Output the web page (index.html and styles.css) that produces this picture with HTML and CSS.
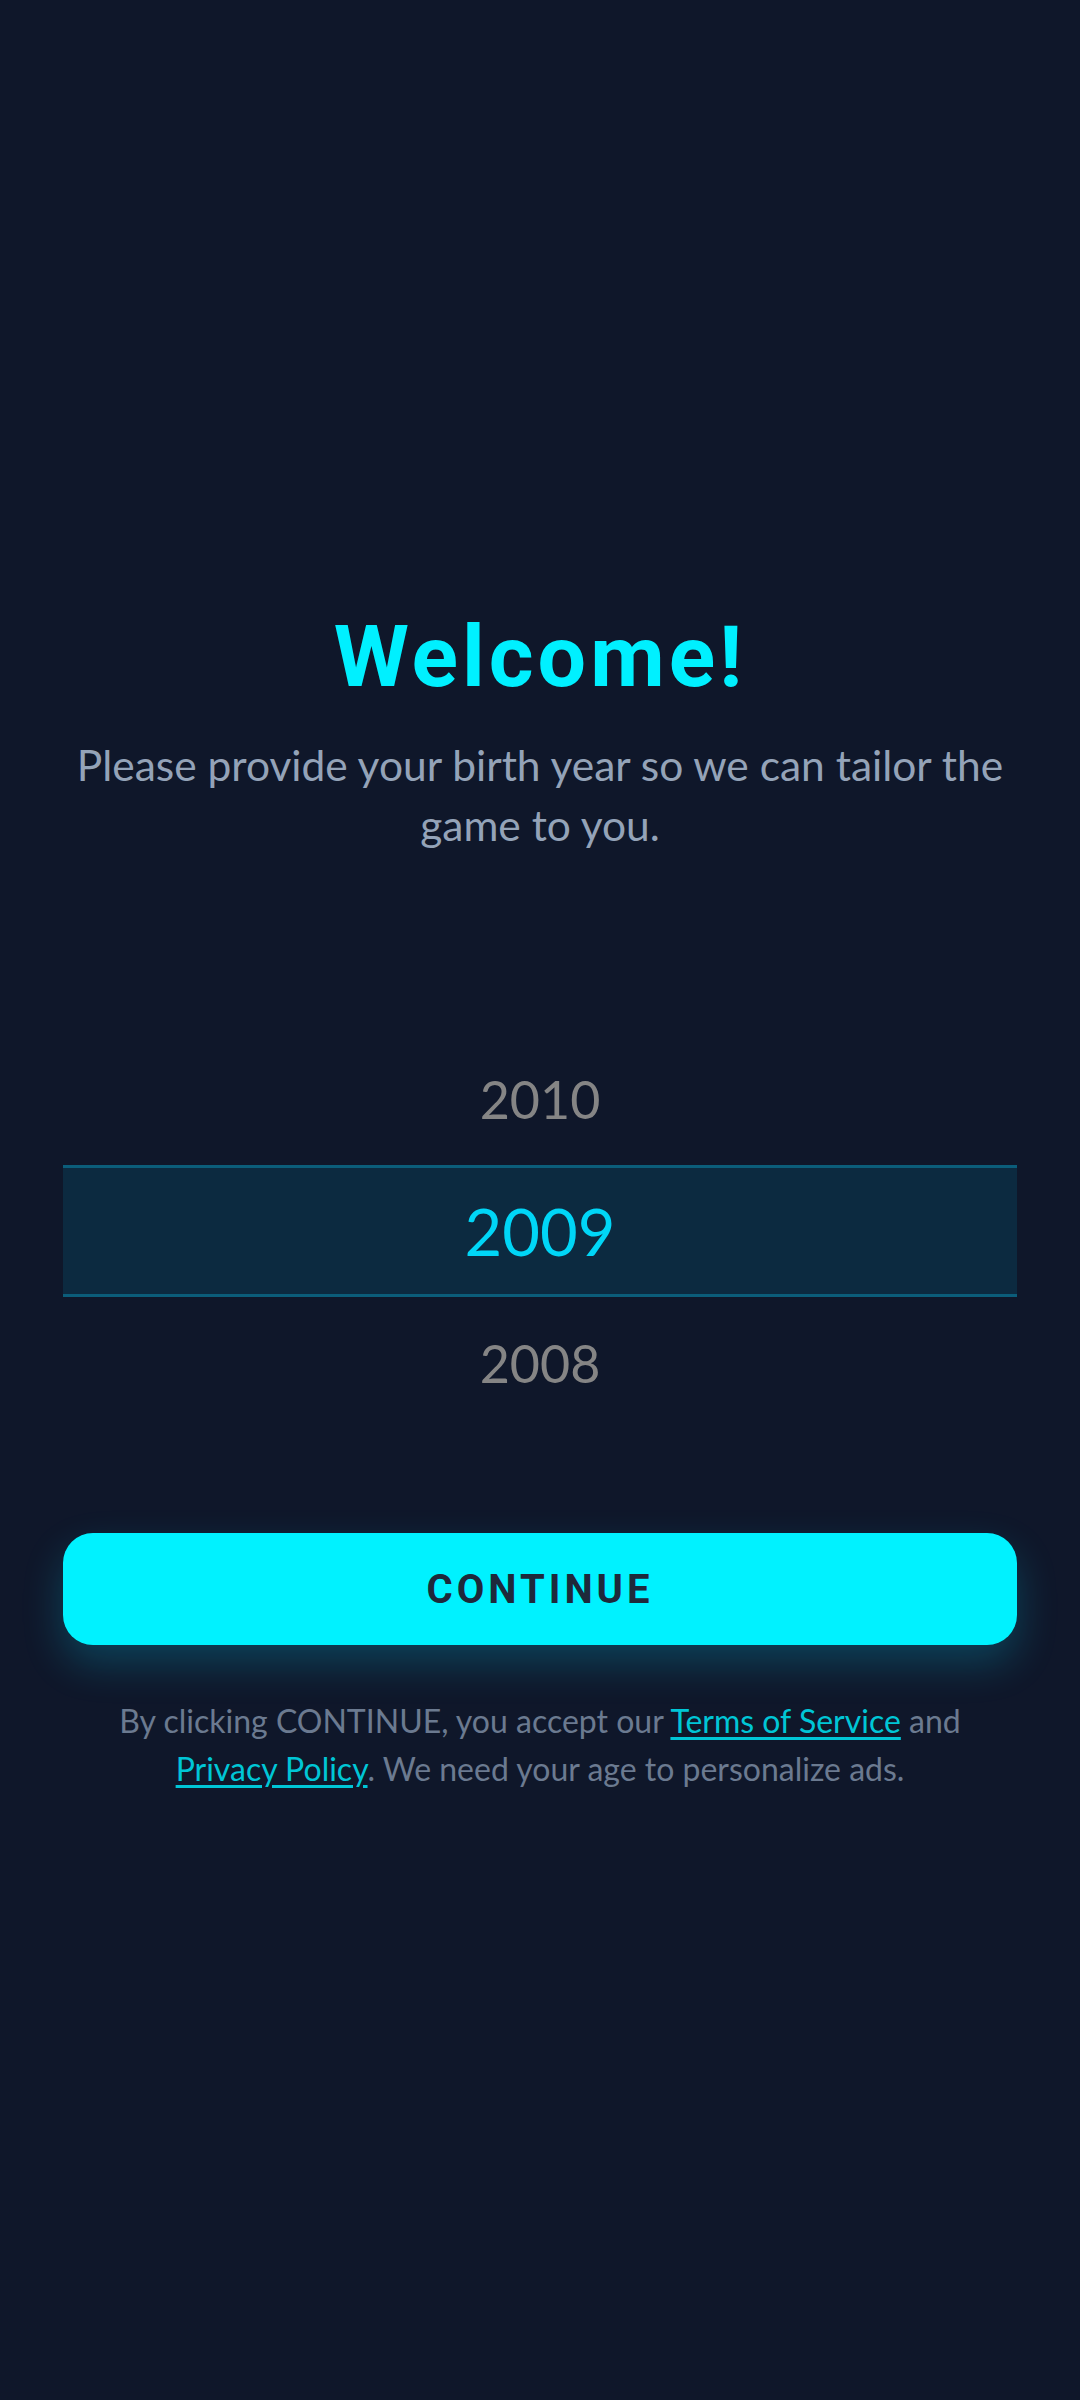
FILE: index.html
```html
<!DOCTYPE html>
<html lang="en">
<head>
<meta charset="utf-8">
<title>Welcome</title>
<link rel="stylesheet" href="styles.css">
</head>
<body>
<main class="screen">
  <h1 class="title">Welcome!</h1>
  <p class="subtitle">Please provide your birth year so we can tailor the game to you.</p>
  <div class="picker">
    <div class="year">2010</div>
    <div class="year selected">2009</div>
    <div class="year">2008</div>
  </div>
  <button class="continue">CONTINUE</button>
  <p class="legal">By clicking CONTINUE, you accept our <a href="#">Terms of Service</a> and <a href="#">Privacy Policy</a>. We need your age to personalize ads.</p>
</main>
</body>
</html>
```

FILE: styles.css
```css
html, body {
  margin: 0;
  padding: 0;
  background: #0f172a;
}
body {
  min-height: 2400px;
  font-family: "Lato", "Noto Sans", sans-serif;
}
.screen {
  display: flex;
  flex-direction: column;
  align-items: stretch;
  padding: 605px 63px 0;
}
.title {
  margin: 0;
  font-family: "Roboto", "Liberation Sans", sans-serif;
  font-weight: 700;
  font-size: 86px;
  line-height: 104px;
  letter-spacing: 4px;
  color: #00f0ff;
  text-align: center;
}
.subtitle {
  margin: 26px auto 0;
  max-width: 954px;
  font-size: 42.5px;
  line-height: 60px;
  color: #94a3b8;
  text-align: center;
}
.picker {
  margin-top: 178px;
  display: flex;
  flex-direction: column;
}
.year {
  height: 132px;
  box-sizing: border-box;
  display: flex;
  align-items: center;
  justify-content: center;
  font-size: 52px;
  color: #858585;
}
.year.selected {
  background: #0c2a40;
  border-top: 3px solid #0b5d7a;
  border-bottom: 3px solid #0b5d7a;
  color: #00d6f7;
  font-size: 65px;
}
.continue {
  margin-top: 104px;
  height: 112px;
  border: none;
  border-radius: 30px;
  background: #00f2ff;
  color: #1e293b;
  font-family: "Roboto", "Liberation Sans", sans-serif;
  font-weight: 700;
  font-size: 40px;
  letter-spacing: 4px;
  box-shadow: 0 18px 40px rgba(0, 220, 255, 0.22);
  cursor: pointer;
}
.legal {
  margin: 52px auto 0;
  max-width: 900px;
  font-size: 32px;
  line-height: 48px;
  color: #6b7a90;
  text-align: center;
}
.legal a {
  color: #00c6d6;
  text-decoration: underline;
  text-underline-offset: 4px;
}
```
